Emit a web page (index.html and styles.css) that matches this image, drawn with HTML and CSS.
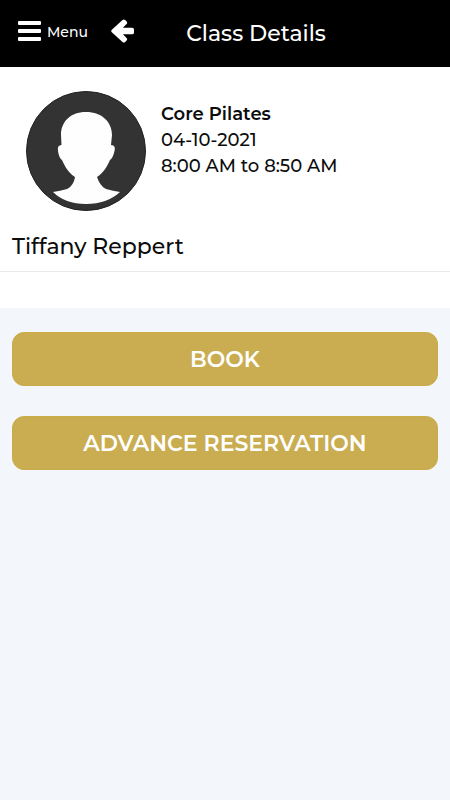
FILE: index.html
```html
<!DOCTYPE html>
<html lang="en">
<head>
    <meta charset="UTF-8">
    <meta name="viewport" content="width=device-width, initial-scale=1">
    <title>Class Details</title>
    <link rel="stylesheet" href="styles.css">
</head>
<body>
    <header class="header-bar">
        <div class="header-left">
            <button type="button" class="menu-btn">
                <svg width="24" height="20" viewBox="0 0 24 20" aria-hidden="true">
                    <path fill="#fff" d="M1 0h21q1 0 1 1v2q0 1-1 1H1q-1 0-1-1V1q0-1 1-1zM1 8h21q1 0 1 1v2q0 1-1 1H1q-1 0-1-1V9q0-1 1-1zM1 16h21q1 0 1 1v2q0 1-1 1H1q-1 0-1-1v-2q0-1 1-1z"/>
                </svg>
                <span>Menu</span>
            </button>
            <a href="#" class="back-link" aria-label="Back">
                <svg width="24" height="24" viewBox="0 0 24 24" aria-hidden="true">
                    <path fill="#fff" d="M23 10.600v2.800q0 1.900-1.900 1.900H11.900l3.700 3.700q1.200 1.300 0 2.500l-1.500 1.500q-1.300 1.200-2.600 0L.8 13.300q-1.200-1.300 0-2.600L11.500 1q1.300-1.200 2.600 0l1.500 1.500q1.200 1.200 0 2.500L11.900 8.700h9.200q1.900 0 1.900 1.900z"/>
                </svg>
            </a>
        </div>
        <h1>Class Details</h1>
    </header>
    <main>
        <section class="class-card">
            <div class="class-info">
                <svg class="avatar" width="120" height="120" viewBox="0 0 120 120" role="img" aria-label="Instructor photo">
                    <defs>
                        <pattern id="stripes" width="4" height="4" patternUnits="userSpaceOnUse">
                            <rect width="4" height="4" fill="#fff"/>
                            <path d="M0 4L4 0" stroke="#fafafa"/>
                        </pattern>
                    </defs>
                    <circle cx="60" cy="60" r="59.500" fill="#333" stroke="#222"/>
                    <path fill="url(#stripes)" d="M60 21C76 21 86 31 86 44L85 54Q90 54 88.500 60Q87 67 84 69C81 76 77 82 71 86C73 92 76 96 80 98Q87 100 94 101Q81 113 60 113Q39 113 27 101Q34 100 41 98C45 96 48 92 49 86C43 82 39 76 36 69Q33 67 32 60Q31 54 35.500 54L35 44C35 31 44 21 60 21z"/>
                </svg>
                <div class="class-text">
                    <h2>Core Pilates</h2>
                    <p>04-10-2021</p>
                    <p>8:00 AM to 8:50 AM</p>
                </div>
            </div>
            <h3 class="instructor">Tiffany Reppert</h3>
        </section>
        <div class="actions">
            <button type="button" class="btn">BOOK</button>
            <button type="button" class="btn">ADVANCE RESERVATION</button>
        </div>
    </main>
</body>
</html>
```
FILE: styles.css
```css
body {
    margin: 0;
    font-family: Montserrat, Inter, sans-serif;
    font-weight: 500;
    background-color: #f3f6fb;
    color: #0c0c0c;
}
h1, h2, h3, p {
    margin: 0;
}
.header-bar {
    background-color: #000;
    color: white;
    display: grid;
    grid-template-columns: 1fr auto 1fr;
    align-items: center;
    height: 67px;
    padding: 0 18px;
}
.header-left {
    display: flex;
    align-items: center;
    gap: 23px;
    padding-bottom: 6px;
    /* the buttons may run up to the title */
    width: 0;
}
.menu-btn {
    display: flex;
    align-items: center;
    gap: 5px;
    padding: 0;
    border: none;
    background: none;
    color: white;
    font-family: inherit;
    font-size: 14px;
    font-weight: 500;
    line-height: 20px;
    cursor: pointer;
}
.menu-btn span {
    padding-top: 2px;
}
.header-bar svg {
    display: block;
    flex: none;
}
.header-bar h1 {
    font-size: 22px;
    line-height: 28px;
    font-weight: 500;
    padding-left: 62px;
}
.class-card {
    background-color: white;
    padding-bottom: 36px;
}
.class-info {
    display: flex;
    gap: 15px;
    padding: 24px 26px 0;
}
.avatar {
    flex: none;
}
.class-text {
    padding-top: 10px;
    font-size: 18px;
    line-height: 26px;
}
.class-text h2 {
    font-size: 18px;
    font-weight: 600;
}
.instructor {
    padding: 22px 12px 10px;
    border-bottom: 1px solid #ebebeb;
    font-size: 22px;
    line-height: 28px;
    font-weight: 500;
}
.actions {
    display: flex;
    flex-direction: column;
    gap: 30px;
    padding: 24px 12px;
}
.btn {
    height: 54px;
    padding: 2px 12px 0;
    border: 1px solid #c9ab47;
    border-radius: 12px;
    background-color: #c9ad50;
    color: white;
    font-family: inherit;
    font-size: 22px;
    line-height: 28px;
    font-weight: 600;
    cursor: pointer;
}
```
